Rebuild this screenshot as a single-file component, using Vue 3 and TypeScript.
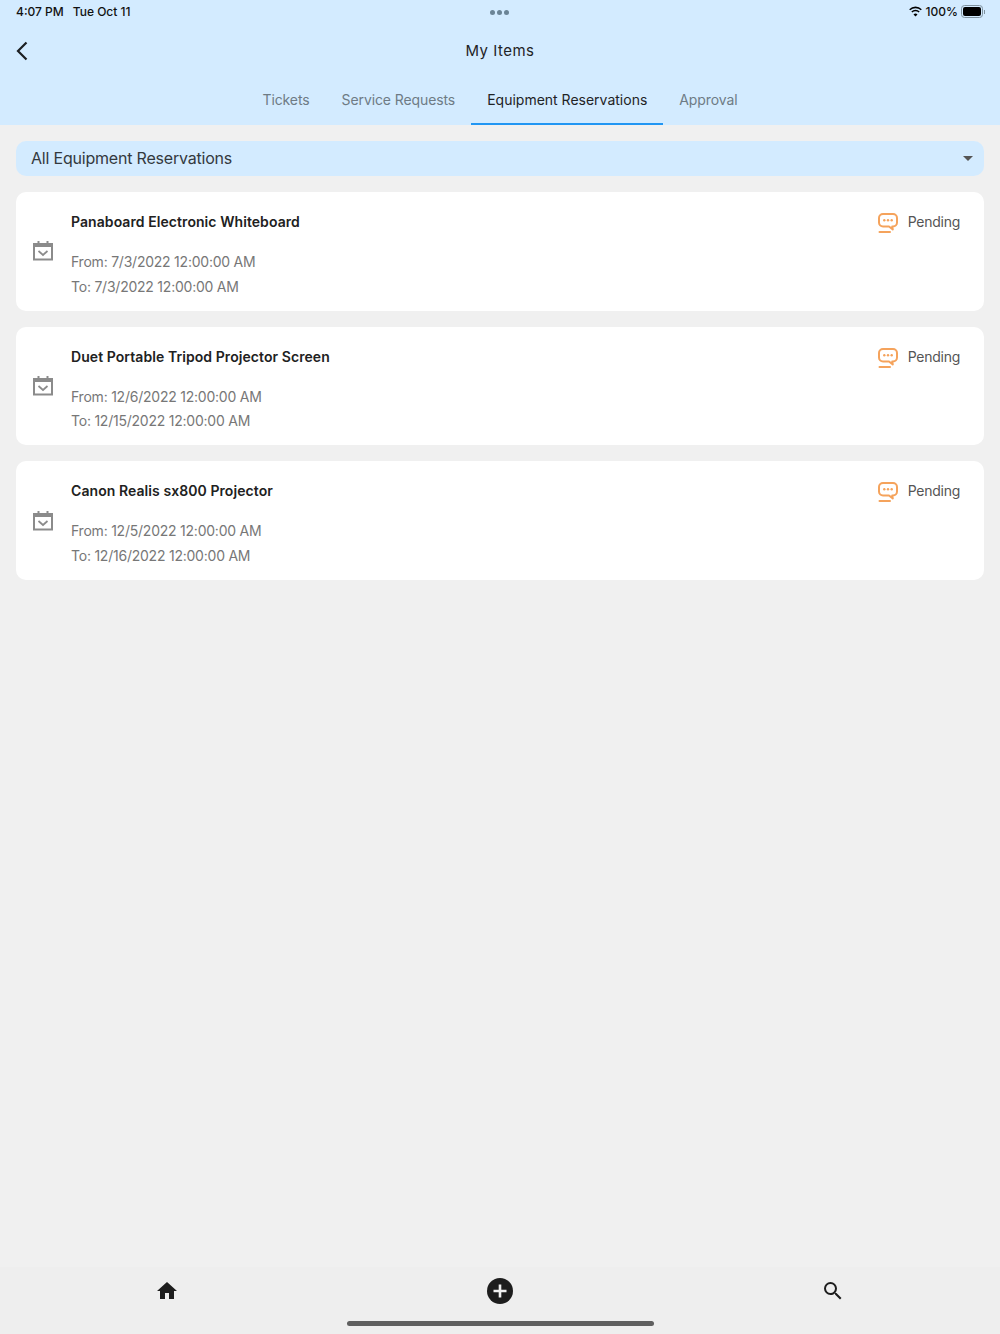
<template>
  <div class="page">
    <header class="top">
      <div class="status">
        <div class="status-left">
          <span>4:07 PM</span>
          <span>Tue Oct 11</span>
        </div>
        <div class="dots"><i></i><i></i><i></i></div>
        <div class="status-right">
          <svg class="wifi" width="15" height="11" viewBox="0 0 15 11">
            <path d="M7.5 2.2c2 0 3.9.8 5.3 2.1l1-1.100A9.200 9.200 0 0 0 7.500.6 9.200 9.200 0 0 0 1.200 3.200l1 1.100A7.700 7.700 0 0 1 7.500 2.200z" fill="#000" />
            <path d="M7.500 5.300c1.200 0 2.300.4 3.100 1.200l1.100-1.100a6 6 0 0 0-8.400 0l1.100 1.100c.8-.8 1.900-1.200 3.100-1.200z" fill="#000" />
            <path d="M7.500 10.500l2-2.100a2.800 2.800 0 0 0-4 0z" fill="#000" />
          </svg>
          <span>100%</span>
          <div class="battery"><div class="battery-fill"></div></div>
          <div class="battery-cap"></div>
        </div>
      </div>
      <div class="titlebar">
        <button class="back" aria-label="Back">
          <svg width="14" height="20" viewBox="0 0 14 20">
            <path d="M11.500 1.500L3 10l8.500 8.500" fill="none" stroke="#1c1f22" stroke-width="2.200" />
          </svg>
        </button>
        <h1>My Items</h1>
      </div>
      <nav class="tabs">
        <a v-for="tab in tabs" :key="tab" class="tab" :class="{ active: tab === activeTab }">{{ tab }}</a>
      </nav>
    </header>

    <main class="content">
      <div class="filter">
        <span>All Equipment Reservations</span>
        <span class="caret"></span>
      </div>

      <div v-for="item in items" :key="item.name" class="card">
        <svg class="cal" width="20" height="20" viewBox="0 0 20 20">
          <path d="M5.500 0v3M14.500 0v3" stroke="#8b8b8b" stroke-width="2" fill="none" />
          <rect x="1" y="3" width="18" height="15.500" fill="none" stroke="#8b8b8b" stroke-width="2" />
          <rect x="1" y="3" width="18" height="3" fill="#8b8b8b" />
          <path d="M5.500 10l4.500 4 4.500-4" stroke="#8b8b8b" stroke-width="1.700" fill="none" />
        </svg>
        <div class="info">
          <div class="name">{{ item.name }}</div>
          <div class="date first">From: {{ item.from }}</div>
          <div class="date">To: {{ item.to }}</div>
        </div>
        <div class="state">
          <svg width="20" height="20" viewBox="0 0 20 20">
            <path d="M5 1h10a4 4 0 0 1 4 4v4.500a4 4 0 0 1-4 4h-.8l.6 3-3.800-3H5a4 4 0 0 1-4-4V5a4 4 0 0 1 4-4z" fill="none" stroke="#f5a35c" stroke-width="2" stroke-linejoin="round" />
            <circle cx="6.300" cy="7.300" r="1.200" fill="#f5a35c" />
            <circle cx="10" cy="7.300" r="1.200" fill="#f5a35c" />
            <circle cx="13.700" cy="7.300" r="1.200" fill="#f5a35c" />
            <path d="M1.500 18.900h10.500" stroke="#f5a35c" stroke-width="2" stroke-linecap="round" />
          </svg>
          <span>Pending</span>
        </div>
      </div>
    </main>

    <footer class="bottom">
      <div class="bottom-icons">
        <svg width="24" height="24" viewBox="0 0 24 24"><path d="M10 20v-6h4v6h5v-8h3L12 3 2 12h3v8z" fill="#1d1d1d" /></svg>
        <svg width="26" height="26" viewBox="0 0 26 26">
          <circle cx="13" cy="13" r="13" fill="#1d1d1d" />
          <path d="M13 6.500v13M6.500 13h13" stroke="#f0f0f0" stroke-width="2.600" />
        </svg>
        <svg width="24" height="24" viewBox="0 0 24 24"><path d="M15.500 14h-.79l-.28-.27A6.470 6.470 0 0 0 16 9.500 6.500 6.500 0 1 0 9.500 16c1.610 0 3.090-.59 4.230-1.570l.27.28v.79l5 4.990L20.490 19l-4.990-5zm-6 0C7.010 14 5 11.990 5 9.500S7.010 5 9.500 5 14 7.010 14 9.500 11.990 14 9.500 14z" fill="#1d1d1d" /></svg>
      </div>
      <div class="home-bar"></div>
    </footer>
  </div>
</template>

<script setup lang="ts">
const tabs = ['Tickets', 'Service Requests', 'Equipment Reservations', 'Approval']
const activeTab = 'Equipment Reservations'

const items = [
  { name: 'Panaboard Electronic Whiteboard', from: '7/3/2022 12:00:00 AM', to: '7/3/2022 12:00:00 AM' },
  { name: 'Duet Portable Tripod Projector Screen', from: '12/6/2022 12:00:00 AM', to: '12/15/2022 12:00:00 AM' },
  { name: 'Canon Realis sx800 Projector', from: '12/5/2022 12:00:00 AM', to: '12/16/2022 12:00:00 AM' }
]
</script>

<style>
html,
body {
  margin: 0;
  background: #f0f0f0;
}
</style>

<style scoped>
.page {
  height: 1334px;
  display: flex;
  flex-direction: column;
  font-family: Inter, "Liberation Sans", sans-serif;
  background: #f0f0f0;
  overflow: hidden;
}

.top {
  height: 125px;
  background: #d3ebff;
  flex-shrink: 0;
}

.status {
  height: 23px;
  padding: 0 15px 0 16px;
  display: flex;
  align-items: center;
  justify-content: space-between;
  font-size: 12px;
  font-weight: 500;
  color: #111;
  position: relative;
}

.status-left {
  display: flex;
  gap: 9px;
}

.dots {
  position: absolute;
  left: 490px;
  top: 10px;
  display: flex;
  gap: 2px;
}

.dots i {
  width: 5px;
  height: 5px;
  border-radius: 50%;
  background: #6b8496;
}

.status-right {
  display: flex;
  align-items: center;
  gap: 3px;
}

.battery {
  width: 22px;
  height: 13px;
  box-sizing: border-box;
  border: 1px solid #7f929f;
  border-radius: 3.500px;
  padding: 1px;
}

.battery-fill {
  height: 100%;
  background: #000;
  border-radius: 2px;
}

.battery-cap {
  width: 1px;
  height: 4px;
  margin-left: -2px;
  background: #7f929f;
}

.titlebar {
  height: 55px;
  display: flex;
  align-items: center;
  justify-content: center;
  position: relative;
}

.back {
  position: absolute;
  left: 15px;
  top: 18px;
  padding: 0;
  border: 0;
  background: none;
  display: flex;
}

h1 {
  margin: 0 0 1px;
  font-size: 15px;
  font-weight: 400;
  letter-spacing: 0.5px;
  color: #1f2326;
}

.tabs {
  height: 47px;
  display: flex;
  justify-content: center;
}

.tab {
  padding: 0 16px 2px;
  display: flex;
  align-items: center;
  font-size: 14px;
  letter-spacing: -0.1px;
  color: #6e7b85;
  box-sizing: border-box;
  border-bottom: 2px solid transparent;
}

.tab.active {
  color: #1f2326;
  font-weight: 400;
  letter-spacing: 0;
  border-bottom-color: #2196f3;
}

.content {
  flex: 1;
  padding: 16px;
  display: flex;
  flex-direction: column;
  gap: 16px;
}

.filter {
  height: 35px;
  padding: 0 11px 2px 15px;
  box-sizing: border-box;
  display: flex;
  align-items: center;
  justify-content: space-between;
  background: #d3ebff;
  border-radius: 10px;
  font-size: 16px;
  letter-spacing: -0.2px;
  color: #33393e;
}

.caret {
  width: 0;
  height: 0;
  margin-top: 2px;
  border-left: 5px solid transparent;
  border-right: 5px solid transparent;
  border-top: 5px solid #555;
}

.card {
  height: 118.700px;
  box-sizing: border-box;
  padding: 0 24px 0 17px;
  display: flex;
  align-items: center;
  background: #fff;
  border-radius: 10px;
}

.cal {
  margin-right: 18px;
  flex-shrink: 0;
}

.info {
  flex: 1;
  align-self: flex-start;
  padding-top: 21px;
}

.name {
  font-size: 14px;
  font-weight: 600;
  line-height: 17px;
  letter-spacing: 0.07px;
  color: #212121;
}

.date {
  font-size: 14px;
  line-height: 17px;
  margin-top: 7.500px;
  letter-spacing: -0.23px;
  color: #777;
}

.date.first {
  margin-top: 23px;
}

.state {
  align-self: flex-start;
  padding-top: 20px;
  display: flex;
  align-items: flex-start;
  gap: 10px;
  font-size: 14px;
  line-height: 19px;
  letter-spacing: -0.25px;
  color: #555;
}

.state svg {
  margin-top: 1px;
}

.bottom {
  height: 67px;
  background: #eeeeee;
  flex-shrink: 0;
  position: relative;
}

.bottom-icons {
  padding-top: 11px;
  display: grid;
  grid-template-columns: 1fr 1fr 1fr;
  justify-items: center;
  align-items: center;
}

.home-bar {
  position: absolute;
  left: 347px;
  bottom: 8px;
  width: 307px;
  height: 5px;
  border-radius: 3px;
  background: #5f5f5f;
}
</style>
